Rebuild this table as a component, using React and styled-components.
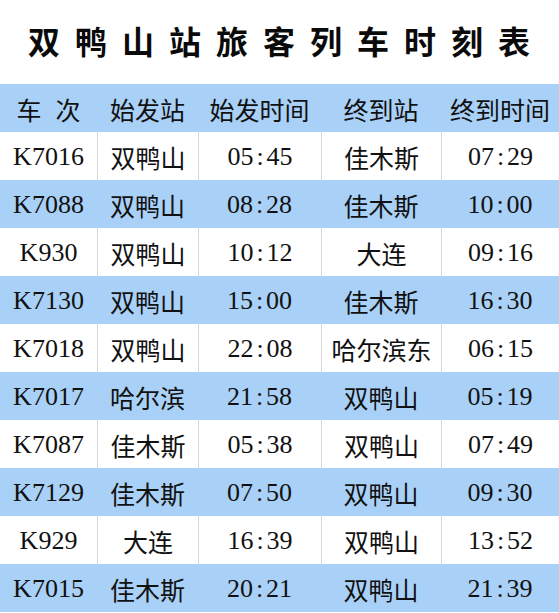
import React from "react";
import styled, { createGlobalStyle } from "styled-components";

const Global = createGlobalStyle`
  html, body { margin: 0; padding: 0; background: #ffffff; }
  body { font-family: "Liberation Serif", "Noto Sans CJK SC", serif; }
`;

const Page = styled.div`
  width: 559px;
  display: flex;
  flex-direction: column;
  background: #ffffff;
`;

const Title = styled.h1`
  margin: 0;
  height: 84px;
  display: flex;
  align-items: center;
  justify-content: center;
  padding: 0 0 4px 14px;
  box-sizing: border-box;
  font-family: "Noto Sans CJK SC", sans-serif;
  font-weight: 700;
  font-size: 32px;
  letter-spacing: 15px;
  color: #0a0a0a;
`;

const Row = styled.div`
  display: grid;
  grid-template-columns: 97px 101px 123px 120px 118px;
  height: 48px;
  background: ${(p) => (p.$alt ? "#a9d0f6" : "#ffffff")};
`;

const Cell = styled.div`
  display: flex;
  align-items: center;
  justify-content: center;
  padding-top: 2px;
  font-family: "Liberation Serif", "Noto Sans CJK SC", serif;
  font-size: 26px;
  color: #111111;
  border-left: ${(p) => (p.$first || p.$alt ? "none" : "1px solid #d9d9d9")};
  box-sizing: border-box;
  white-space: pre;
`;

const HeadCell = styled(Cell)`
  font-family: "Noto Sans CJK SC", sans-serif;
  font-size: 25px;
  border-left: none;
  color: #111111;
`;

const Gap = styled.span`
  display: inline-block;
  width: 14px;
`;

const Colon = styled.span`
  margin: 0 3px;
`;

const Time = ({ v }) => {
  const [h, m] = v.split(":");
  return (
    <>
      {h}
      <Colon>:</Colon>
      {m}
    </>
  );
};

const CJK = styled.span`
  font-family: "Noto Sans CJK SC", sans-serif;
  font-size: 25px;
`;

const data = [
  ["K7016", "双鸭山", "05:45", "佳木斯", "07:29"],
  ["K7088", "双鸭山", "08:28", "佳木斯", "10:00"],
  ["K930", "双鸭山", "10:12", "大连", "09:16"],
  ["K7130", "双鸭山", "15:00", "佳木斯", "16:30"],
  ["K7018", "双鸭山", "22:08", "哈尔滨东", "06:15"],
  ["K7017", "哈尔滨", "21:58", "双鸭山", "05:19"],
  ["K7087", "佳木斯", "05:38", "双鸭山", "07:49"],
  ["K7129", "佳木斯", "07:50", "双鸭山", "09:30"],
  ["K929", "大连", "16:39", "双鸭山", "13:52"],
  ["K7015", "佳木斯", "20:21", "双鸭山", "21:39"],
];

export default function App() {
  return (
    <Page>
      <Global />
      <Title>双鸭山站旅客列车时刻表</Title>
      <Row $alt>
        <HeadCell $first $alt>
          车<Gap />次
        </HeadCell>
        <HeadCell $alt>始发站</HeadCell>
        <HeadCell $alt>始发时间</HeadCell>
        <HeadCell $alt>终到站</HeadCell>
        <HeadCell $alt>终到时间</HeadCell>
      </Row>
      {data.map((r, i) => {
        const alt = i % 2 === 1;
        return (
          <Row key={i} $alt={alt}>
            <Cell $first $alt={alt}>{r[0]}</Cell>
            <Cell $alt={alt}><CJK>{r[1]}</CJK></Cell>
            <Cell $alt={alt}><Time v={r[2]} /></Cell>
            <Cell $alt={alt}><CJK>{r[3]}</CJK></Cell>
            <Cell $alt={alt}><Time v={r[4]} /></Cell>
          </Row>
        );
      })}
    </Page>
  );
}
